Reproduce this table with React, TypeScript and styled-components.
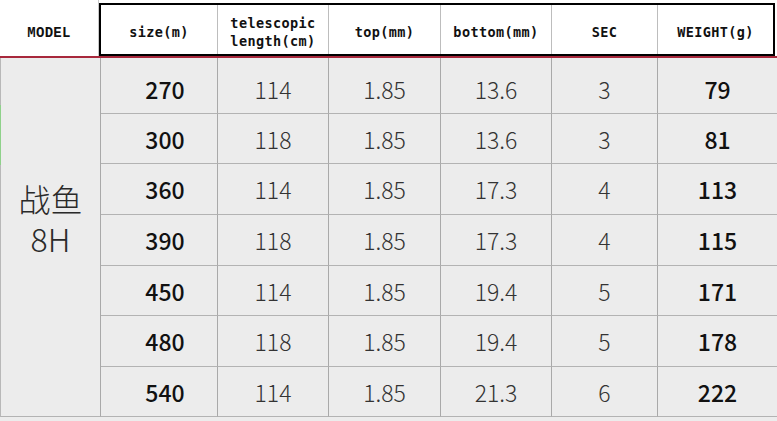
import { styled, createGlobalStyle } from "styled-components";

const GlobalStyle = createGlobalStyle`
  html, body {
    margin: 0;
    padding: 0;
    background: #ffffff;
  }
`;

const Page = styled.div`
  width: 777px;
  height: 421px;
  overflow: hidden;
  background: #ececec;
  font-family: "Noto Sans CJK SC", "Noto Sans", sans-serif;
`;

const HeaderRow = styled.div`
  display: grid;
  grid-template-columns: 99px 676px 2px;
  height: 56px;
  background: #ffffff;
`;

const ModelHead = styled.div`
  display: flex;
  align-items: center;
  justify-content: center;
  padding-top: 10px;
  font-family: "Liberation Mono", "Courier New", monospace;
  font-weight: 700;
  font-size: 14px;
  letter-spacing: 0.3px;
  color: #111;
  border-right: 1px solid #c8c8c8;
`;

const HeaderBox = styled.div`
  box-sizing: border-box;
  margin-top: 3px;
  height: 53px;
  border: 2px solid #000;
  display: grid;
  grid-template-columns: 117px 111px 112px 111px 106px 115px;
`;

const HeadCell = styled.div<{ $last?: boolean }>`
  display: flex;
  flex-direction: column;
  align-items: center;
  justify-content: center;
  padding-top: 5px;
  border-right: ${(p) => (p.$last ? "none" : "1px solid #bdbdbd")};
  font-family: "DejaVu Sans Mono", monospace;
  font-weight: 700;
  font-size: 13.5px;
  line-height: 18px;
  letter-spacing: 0.4px;
  color: #111;
  white-space: nowrap;
`;

const RedLine = styled.div`
  height: 2px;
  background: #a8283c;
`;

const Body = styled.div`
  display: grid;
  grid-template-columns: 101px 117px 111px 112px 111px 106px 119px;
  grid-template-rows: 56px 50px 51px 51px 50px 51px 50px;
`;

const ModelCell = styled.div`
  position: relative;
  grid-row: 1 / span 7;
  box-sizing: border-box;
  display: flex;
  align-items: center;
  justify-content: center;
  padding-bottom: 38px;
  border-left: 1px solid #b8b8b8;
  border-right: 1px solid #a9a9a9;
  border-bottom: 1px solid #b3b3b3;
  font-weight: 300;
  font-size: 32px;
  line-height: 40px;
  text-align: center;
  color: #2a2a2a;

  &::before {
    content: "";
    position: absolute;
    left: -1px;
    top: 47px;
    width: 1px;
    height: 60px;
    background: #8fd18a;
  }
`;

const Cell = styled.div<{ $bold?: boolean; $first?: boolean; $shift?: number; $last?: boolean }>`
  box-sizing: border-box;
  display: flex;
  align-items: center;
  justify-content: center;
  padding-top: ${(p) => (p.$first ? 6 : 0)}px;
  padding-left: ${(p) => p.$shift ?? 0}px;
  border-right: ${(p) => (p.$last ? "none" : "1px solid #a9a9a9")};
  border-bottom: 1px solid #b3b3b3;
  font-size: 23px;
  font-weight: ${(p) => (p.$bold ? 500 : 300)};
  color: ${(p) => (p.$bold ? "#111" : "#333")};
`;

const heads = [
  ["size(m)"],
  ["telescopic", "length(cm)"],
  ["top(mm)"],
  ["bottom(mm)"],
  ["SEC"],
  ["WEIGHT(g)"],
];

const rows = [
  ["270", "114", "1.85", "13.6", "3", "79"],
  ["300", "118", "1.85", "13.6", "3", "81"],
  ["360", "114", "1.85", "17.3", "4", "113"],
  ["390", "118", "1.85", "17.3", "4", "115"],
  ["450", "114", "1.85", "19.4", "5", "171"],
  ["480", "118", "1.85", "19.4", "5", "178"],
  ["540", "114", "1.85", "21.3", "6", "222"],
];

export default function App() {
  return (
    <>
      <GlobalStyle />
      <Page>
        <HeaderRow>
          <ModelHead>MODEL</ModelHead>
          <HeaderBox>
            {heads.map((h, i) => (
              <HeadCell key={i} $last={i === heads.length - 1}>
                {h.map((line) => (
                  <span key={line}>{line}</span>
                ))}
              </HeadCell>
            ))}
          </HeaderBox>
        </HeaderRow>
        <RedLine />
        <Body>
          <ModelCell>
            <span>
              战鱼
              <br />
              8H
            </span>
          </ModelCell>
          {rows.map((r, ri) =>
            r.map((v, ci) => (
              <Cell
                key={`${ri}-${ci}`}
                $first={ri === 0}
                $bold={ci === 0 || ci === 5}
                $shift={ci === 0 ? 12 : 0}
                $last={ci === 5}
              >
                {v}
              </Cell>
            ))
          )}
        </Body>
      </Page>
    </>
  );
}
